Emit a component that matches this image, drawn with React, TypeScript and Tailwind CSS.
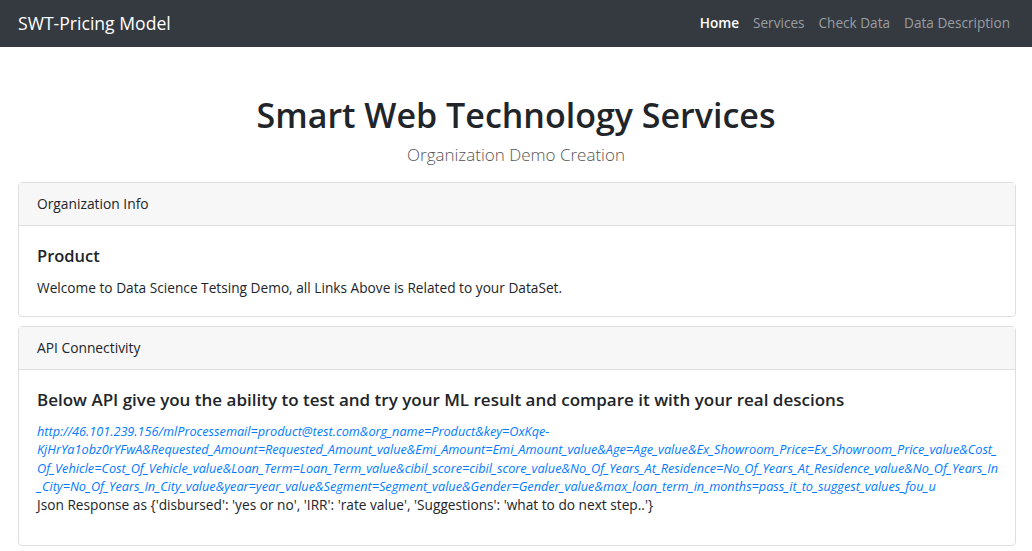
import React from 'react'

const font = { fontFamily: '"Open Sans", "Noto Sans", sans-serif' }

const urlLines = [
  'http://46.101.239.156/mlProcessemail=product@test.com&org_name=Product&key=OxKqe-',
  'KjHrYa1obz0rYFwA&Requested_Amount=Requested_Amount_value&Emi_Amount=Emi_Amount_value&Age=Age_value&Ex_Showroom_Price=Ex_Showroom_Price_value&Cost_',
  'Of_Vehicle=Cost_Of_Vehicle_value&Loan_Term=Loan_Term_value&cibil_score=cibil_score_value&No_Of_Years_At_Residence=No_Of_Years_At_Residence_value&No_Of_Years_In',
  '_City=No_Of_Years_In_City_value&year=year_value&Segment=Segment_value&Gender=Gender_value&max_loan_term_in_months=pass_it_to_suggest_values_fou_u',
]

function Card({ title, children }: { title: string; children: React.ReactNode }) {
  return (
    <div className="border border-[#dfdfdf] rounded-[4px] bg-white">
      <div className="h-[43px] flex items-center px-[18px] pt-[1px] bg-[#f7f7f7] border-b border-[#dfdfdf] text-[13.8px] text-[#212529]">
        {title}
      </div>
      {children}
    </div>
  )
}

export default function App() {
  return (
    <div className="w-[1032px] h-[551px] bg-white overflow-hidden text-[#212529]" style={font}>
      <nav className="h-[47px] bg-[#343a40] flex items-center justify-between pl-[18px] pr-[22px]">
        <a href="#" className="text-white text-[17.6px]">
          SWT-Pricing Model
        </a>
        <div className="flex gap-[14px] text-[13.6px]">
          <a href="#" className="text-white font-semibold">Home</a>
          <a href="#" className="text-[#9a9da0]">Services</a>
          <a href="#" className="text-[#9a9da0]">Check Data</a>
          <a href="#" className="text-[#9a9da0]">Data Description</a>
        </div>
      </nav>

      <div className="pt-[44px] text-center">
        <h1 className="text-[34px] leading-[48px] font-semibold text-[#212529]">Smart Web Technology Services</h1>
        <p className="text-[17px] leading-[26px] font-light text-[#555] mt-[3px]">Organization Demo Creation</p>
      </div>

      <div className="ml-[18px] mr-[16px] mt-[14px] flex flex-col gap-[9px]">
        <Card title="Organization Info">
          <div className="px-[18px] pt-[18px] pb-[18px]">
            <h5 className="text-[16.5px] leading-[24px] font-semibold">Product</h5>
            <p className="text-[13.7px] leading-[20px] mt-[10px]">
              Welcome to Data Science Tetsing Demo, all Links Above is Related to your DataSet.
            </p>
          </div>
        </Card>

        <Card title="API Connectivity">
          <div className="px-[18px] pt-[18px] pb-[30px]">
            <h5 className="text-[17px] leading-[24px] font-semibold">
              Below API give you the ability to test and try your ML result and compare it with your real descions
            </h5>
            <div className="mt-[10px] text-[12.7px] leading-[18.3px] italic text-[#007bff] whitespace-nowrap">
              {urlLines.map((l) => (
                <div key={l}>{l}</div>
              ))}
            </div>
            <p className="text-[13.7px] leading-[20px]">
              Json Response as {"{'disbursed': 'yes or no', 'IRR': 'rate value', 'Suggestions': 'what to do next step..'}"}
            </p>
          </div>
        </Card>
      </div>
    </div>
  )
}
